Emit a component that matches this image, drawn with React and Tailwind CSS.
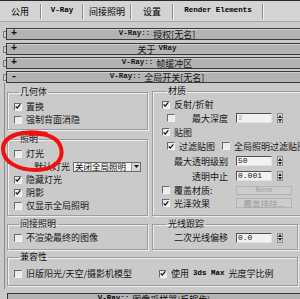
import React from 'react';

const cjk = { fontFamily: '"Noto Sans CJK SC", "Noto Sans", sans-serif' };
const mono = { fontFamily: '"Liberation Mono", "DejaVu Sans Mono", monospace' };

const Check = ({ on }) => (
  <span className="w-[8px] h-[8px] shrink-0 bg-[#ececec] border-t border-l border-[#6a6a6a] border-r border-b border-r-[#f4f4f4] border-b-[#f4f4f4] flex items-center justify-center">
    {on && (
      <svg width="7" height="7" viewBox="0 0 7 7">
        <path d="M0.8 3.4 L2.6 5.4 L6.2 1" stroke="#111" strokeWidth="1.5" fill="none" />
      </svg>
    )}
  </span>
);

const Row = ({ on, label, h = 'h-[13px]', indent = '' }) => (
  <div className={`flex items-center gap-[4px] shrink-0 whitespace-nowrap ${h} ${indent}`}>
    <Check on={on} />
    <span className="text-[9px] leading-none text-[#161616]" style={cjk}>{label}</span>
  </div>
);

const Spinner = () => (
  <span className="ml-[5px] w-[6px] h-[10px] flex flex-col justify-center items-center gap-[1px] bg-[#d8d8d8] border border-[#8a8a8a]">
    <svg width="4" height="3" viewBox="0 0 4 3"><path d="M0 3 L2 0 L4 3Z" fill="#222" /></svg>
    <svg width="4" height="3" viewBox="0 0 4 3"><path d="M0 0 L2 3 L4 0Z" fill="#222" /></svg>
  </span>
);

const Field = ({ value, dim }) => (
  <span className="w-[36px] h-[10px] bg-[#f2f2f2] border-t border-l border-[#505050] border-r border-b border-r-[#e0e0e0] border-b-[#e0e0e0] flex items-center px-[1px]">
    <span className={`text-[8px] leading-none ${dim ? 'text-[#a8a8a8]' : 'text-[#111]'}`} style={mono}>{value}</span>
  </span>
);

const NumRow = ({ label, value, h = 'h-[14px]', lead, dim }) => (
  <div className={`flex items-center whitespace-nowrap ${h}`}>
    <div className="w-[74px] flex items-center justify-end pr-[8px]">
      {lead}
      <span className="text-[9px] leading-none text-[#161616]" style={cjk}>{label}</span>
    </div>
    <Field value={value} dim={dim} />
    <Spinner />
  </div>
);

const Group = ({ title, className = '', children }) => (
  <fieldset className={`border border-[#9c9c9c] shadow-[inset_1px_1px_0_#eeeeee,1px_1px_0_#eeeeee] ${className}`}>
    <legend className="ml-[5px] px-[1px] h-[10px] text-[9px] leading-[10px] text-[#161616] whitespace-nowrap" style={cjk}>{title}</legend>
    {children}
  </fieldset>
);

const Bar = ({ sign, children, className = '' }) => (
  <div className={`flex items-center ${className}`}>
    <span className="w-[3px] ml-[3px] h-[7px] shrink-0 border-l border-t border-b border-[#7a7a7a]" />
    <div className="w-[302px] h-[12px] shrink-0 bg-[#b3b3b3] border border-[#3a3a3a] shadow-[inset_0_1px_0_#d0d0d0] flex items-center">
      <span className="w-[14px] shrink-0 pl-[4px] text-[10px] font-bold leading-none text-[#111]" style={mono}>{sign}</span>
      <div className="flex-1 flex justify-center items-center gap-[3px] pr-[14px] whitespace-nowrap text-[#161616]">{children}</div>
    </div>
  </div>
);

const Tab = ({ w, children }) => (
  <div className={`${w} h-full flex items-center justify-center whitespace-nowrap`}>{children}</div>
);
const Sep = () => <span className="w-[2px] h-[15px] border-l border-[#8c8c8c] border-r border-r-[#f2f2f2]" />;

export default function App() {
  return (
    <div className="w-[300px] h-[299px] overflow-hidden relative bg-[#cacaca]">
      {/* tabs */}
      <div className="h-[22px] border-t border-[#2a2a2a] bg-[#d3d3d3] border-b border-b-[#a8a8a8] flex items-center">
        <Tab w="w-[40px]"><span className="text-[9px] leading-none" style={cjk}>公用</span></Tab>
        <Sep />
        <Tab w="w-[40px]"><span className="text-[7.5px] font-bold leading-none" style={mono}>V-Ray</span></Tab>
        <Sep />
        <Tab w="w-[46px]"><span className="text-[9px] leading-none" style={cjk}>间接照明</span></Tab>
        <Sep />
        <Tab w="w-[40px]"><span className="text-[9px] leading-none" style={cjk}>设置</span></Tab>
        <Sep />
        <Tab w="w-[88px]"><span className="text-[7.5px] font-bold leading-none" style={mono}>Render Elements</span></Tab>
        <Sep />
      </div>

      {/* rollouts */}
      <Bar sign="+" className="mt-[6px]">
        <span className="text-[7.5px] font-bold leading-none" style={mono}>V-Ray::</span>
        <span className="text-[9px] leading-none" style={cjk}>授权[无名]</span>
      </Bar>
      <Bar sign="+" className="mt-[3px]">
        <span className="text-[9px] leading-none" style={cjk}>关于</span>
        <span className="text-[7.5px] font-bold leading-none" style={mono}>VRay</span>
      </Bar>
      <Bar sign="+" className="mt-[2px]">
        <span className="text-[7.5px] font-bold leading-none" style={mono}>V-Ray::</span>
        <span className="text-[9px] leading-none" style={cjk}>帧缓冲区</span>
      </Bar>
      <Bar sign="-" className="mt-[2px]">
        <span className="text-[7.5px] font-bold leading-none" style={mono}>V-Ray::</span>
        <span className="text-[9px] leading-none" style={cjk}>全局开关[无名]</span>
      </Bar>

      {/* body */}
      <div className="ml-[4px] h-[206px] border-l border-[#8a8a8a] pl-[2px] pt-[3px]">
        <div className="grid grid-cols-[141px_146px] gap-x-[4px]">
          <div className="flex flex-col">
            <Group title="几何体" className="mt-[1px] px-[6px] pt-[3px] pb-[3px]">
              <Row on label="置换" />
              <Row label="强制背面消隐" />
            </Group>
            <Group title="照明" className="mt-[4px] px-[6px] pt-[3px] pb-[3px]">
              <Row label="灯光" />
              <div className="h-[13px] flex items-center pl-[20px] gap-[3px] whitespace-nowrap">
                <span className="shrink-0 text-[9px] leading-none text-[#161616]" style={cjk}>默认灯光</span>
                <span className="shrink-0 w-[68px] h-[10px] bg-[#f4f4f4] border border-[#6a6a6a] flex items-center justify-between">
                  <span className="text-[8.5px] leading-none pl-[1px] text-[#111]" style={cjk}>关闭全局照明</span>
                  <span className="w-[9px] h-full bg-[#d6d6d6] border-l border-[#9a9a9a] flex items-center justify-center">
                    <svg width="5" height="3" viewBox="0 0 5 3"><path d="M0 0 L5 0 L2.5 3Z" fill="#111" /></svg>
                  </span>
                </span>
              </div>
              <Row on label="隐藏灯光" />
              <Row on label="阴影" />
              <Row label="仅显示全局照明" />
            </Group>
          </div>
          <Group title="材质" className="px-[9px] pt-[2px] pb-[5px] overflow-visible">
            <Row on label="反射/折射" />
            <NumRow label="最大深度" value="2" dim lead={<span className="mr-auto pl-[5px] flex"><Check /></span>} />
            <Row on label="贴图" h="h-[14px]" />
            <div className="h-[14px] flex items-center gap-[7px] pl-[5px] whitespace-nowrap">
              <Row on label="过滤贴图" h="h-[14px]" />
              <Row label="全局照明过滤贴图" h="h-[14px]" />
            </div>
            <NumRow label="最大透明级别" value="50" h="h-[16px]" />
            <NumRow label="透明中止" value="0.001" />
            <div className="h-[14px] flex items-center">
              <div className="w-[74px] shrink-0"><Row label="覆盖材质:" h="h-[14px]" /></div>
              <span className="w-[56px] h-[9px] border border-[#b4b4b4] bg-[#cdcdcd] flex items-center justify-center text-[7px] leading-none text-[#9c9c9c]" style={mono}>None</span>
            </div>
            <div className="h-[12px] flex items-center">
              <div className="w-[74px] shrink-0"><Row on label="光泽效果" h="h-[12px]" /></div>
              <span className="w-[56px] h-[10px] border border-[#b4b4b4] bg-[#cdcdcd] flex items-center justify-center text-[8.5px] leading-none text-[#9c9c9c] whitespace-nowrap" style={cjk}>覆盖排除...</span>
            </div>
          </Group>
          <Group title="间接照明" className="mt-[3px] px-[6px] pt-[2px] pb-[5px]">
            <Row label="不渲染最终的图像" />
          </Group>
          <Group title="光线跟踪" className="mt-[3px] px-[9px] pt-[2px] pb-[5px]">
            <NumRow label="二次光线偏移" value="0.0" h="h-[13px]" />
          </Group>
        </div>
        <Group title="兼容性" className="mt-[2px] w-[291px] pl-[6px] pt-[5px] pb-[5px]">
          <div className="flex whitespace-nowrap">
            <div className="w-[145px]"><Row label="旧版阳光/天空/摄影机模型" /></div>
            <div className="flex items-center gap-[4px] h-[13px]">
              <Check on />
              <span className="text-[9px] leading-none text-[#161616]" style={cjk}>使用</span>
              <span className="text-[7.5px] font-bold leading-none" style={mono}>3ds Max</span>
              <span className="text-[9px] leading-none text-[#161616]" style={cjk}>光度学比例</span>
            </div>
          </div>
        </Group>
      </div>

      <div className="ml-[4px] pl-[3px] mt-[4px]">
        <div className="w-[300px] h-[12px] bg-[#b3b3b3] border border-[#3a3a3a] flex justify-center items-start pt-[1px] gap-[3px] pr-[6px] whitespace-nowrap">
          <span className="text-[7.5px] font-bold leading-none" style={mono}>V-Ray::</span>
          <span className="text-[9px] leading-none" style={cjk}>图像采样器(反锯齿)</span>
        </div>
      </div>

      {/* red annotation */}
      <svg className="absolute left-0 top-[129px] pointer-events-none" width="68" height="46" viewBox="0 0 68 46">
        <path d="M46 5 C22 0 3 7 3 20 C3 33 18 41 36 41 C54 41 64 31 61 19 C58 9 47 4 30 5" stroke="#f01010" strokeWidth="4" fill="none" strokeLinecap="round" />
      </svg>
    </div>
  );
}
